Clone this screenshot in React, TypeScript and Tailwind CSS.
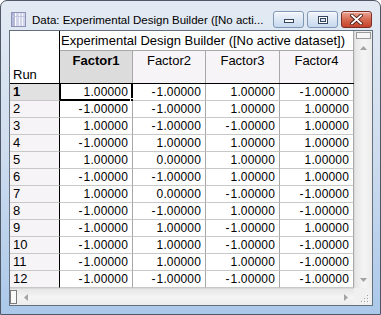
import React from "react";

const data: number[][] = [
  [1, -1, 1, -1],
  [-1, -1, 1, 1],
  [1, -1, -1, 1],
  [-1, 1, 1, 1],
  [1, 0, 1, 1],
  [-1, -1, 1, 1],
  [1, 0, -1, -1],
  [-1, -1, 1, -1],
  [-1, 1, -1, 1],
  [-1, 1, -1, -1],
  [-1, 1, 1, -1],
  [-1, -1, -1, -1],
];

const colW = ["w-[73px]", "w-[73px]", "w-[74px]", "w-[74px]"];
const headers = ["Factor1", "Factor2", "Factor3", "Factor4"];

function Num({ v }: { v: number }) {
  const s = Math.abs(v).toFixed(5);
  return (
    <>
      {v < 0 && <span className="mr-[1px]">-</span>}
      {s}
    </>
  );
}

function TitleIcon() {
  return (
    <svg width="15" height="15" viewBox="0 0 15 15">
      <rect x="0.5" y="0.5" width="14" height="14" fill="#d3d6ea" stroke="#8d92b6" />
      <rect x="1" y="1" width="3" height="13" fill="#b4b8d8" />
      <line x1="4.5" y1="1" x2="4.5" y2="14" stroke="#ffffff" />
      <line x1="8.5" y1="1" x2="8.5" y2="14" stroke="#f4f4fb" />
      <line x1="11.5" y1="1" x2="11.5" y2="14" stroke="#f4f4fb" />
      <line x1="1" y1="4.5" x2="14" y2="4.5" stroke="#c2c5df" />
    </svg>
  );
}

function CaptionButton({ kind }: { kind: "min" | "max" | "close" }) {
  if (kind === "close") {
    return (
      <div className="w-[31px] h-[17px] rounded-[3px] border border-[#7e2f25] bg-linear-to-b from-[#eaa596] via-[#d66a52] to-[#c4412b] flex items-center justify-center shadow-[inset_0_1px_0_rgba(255,255,255,0.5)]">
        <svg width="13" height="11" viewBox="0 0 13 11">
          <path d="M2 1.5 L11 9.5 M11 1.5 L2 9.5" stroke="#4a1d16" strokeWidth="3.6" strokeLinecap="square" />
          <path d="M2 1.5 L11 9.5 M11 1.5 L2 9.5" stroke="#ffffff" strokeWidth="1.8" strokeLinecap="square" />
        </svg>
      </div>
    );
  }
  return (
    <div className="w-[31px] h-[17px] rounded-[3px] border border-[#7f96b5] bg-linear-to-b from-[#f3f6fb] via-[#dce7f4] to-[#c6d8ee] flex items-center justify-center shadow-[inset_0_1px_0_rgba(255,255,255,0.8)]">
      {kind === "min" ? (
        <svg width="12" height="9" viewBox="0 0 12 9">
          <rect x="1.5" y="4.5" width="9" height="3" fill="#ffffff" stroke="#36465c" />
        </svg>
      ) : (
        <svg width="12" height="10" viewBox="0 0 12 10">
          <rect x="1.5" y="1.5" width="9" height="7" fill="none" stroke="#36465c" />
          <rect x="2.5" y="2.5" width="7" height="5" fill="none" stroke="#ffffff" />
          <rect x="3.5" y="3.5" width="5" height="3" fill="none" stroke="#36465c" />
        </svg>
      )}
    </div>
  );
}

function Arrow({ dir }: { dir: "up" | "down" | "left" | "right" }) {
  const paths: Record<string, string> = {
    up: "M0 4 L3.5 0 L7 4 Z",
    down: "M0 0 L7 0 L3.5 4 Z",
    left: "M4 0 L4 7 L0 3.5 Z",
    right: "M0 0 L4 3.5 L0 7 Z",
  };
  const w = dir === "up" || dir === "down" ? 7 : 4;
  const h = dir === "up" || dir === "down" ? 4 : 7;
  return (
    <svg width={w} height={h} viewBox={`0 0 ${w} ${h}`}>
      <path d={paths[dir]} fill="#a3a3a3" />
    </svg>
  );
}

function SizeGrip() {
  const dots = [
    [8, 2],
    [5, 5],
    [8, 5],
    [2, 8],
    [5, 8],
    [8, 8],
  ];
  return (
    <svg width="10" height="10" viewBox="0 0 10 10">
      {dots.map(([x, y], i) => (
        <g key={i}>
          <rect x={x + 1} y={y + 1} width="1" height="1" fill="#ffffff" />
          <rect x={x} y={y} width="1" height="1" fill="#a0a0a0" />
        </g>
      ))}
    </svg>
  );
}

export default function App() {
  return (
    <div className="w-[381px] h-[315px] bg-white" style={{ fontFamily: '"Liberation Sans", Arial, sans-serif' }}>
      <div className="w-[381px] h-[315px] flex flex-col rounded-t-[7px] border border-[#4e5866] bg-linear-to-b from-[#e3eaf3] via-[#cddcee] to-[#abc8ea] overflow-hidden">
        {/* Title bar */}
        <div className="h-[29px] flex items-start shrink-0">
          <div className="mt-[11px] ml-[10px]">
            <TitleIcon />
          </div>
          <div className="mt-[12px] ml-[6px] text-[11.5px] leading-[14px] text-black whitespace-nowrap">
            Data: Experimental Design Builder ([No acti...
          </div>
          <div className="ml-auto mr-[8px] mt-[10px] flex gap-[3px]">
            <CaptionButton kind="min" />
            <CaptionButton kind="max" />
            <CaptionButton kind="close" />
          </div>
        </div>

        {/* Client area */}
        <div className="flex-1 flex pl-[8px] pr-[7px] pb-[8px]">
          <div className="flex-1 flex flex-col border border-[#65707e] bg-[#f0f0f0]">
            <div className="flex-1 flex">
              {/* Spreadsheet */}
              <div className="flex-1 flex flex-col text-black">
                {/* header block */}
                <div className="flex">
                  <div className="w-[50px] h-[53px] bg-white border-r border-b border-black flex items-end pl-[3px] pb-[1px] text-[13px] leading-[15px]">
                    Run
                  </div>
                  <div className="flex flex-col">
                    <div className="h-[20px] bg-white border-b border-r border-[#a8a8a8] pl-[1px] text-[13px] leading-[19px] whitespace-nowrap w-[294px]">
                      Experimental Design Builder ([No active dataset])
                    </div>
                    <div className="flex h-[33px] border-b border-black">
                      {headers.map((h, i) => (
                        <div
                          key={h}
                          className={`${colW[i]} border-r border-[#a8a8a8] text-center text-[13px] leading-[15px] pt-[2px] ${
                            i === 0 ? "bg-[#dcdcdc] font-bold" : "bg-[#f7f4f7]"
                          }`}
                        >
                          {h}
                        </div>
                      ))}
                    </div>
                  </div>
                </div>
                {/* data rows */}
                {data.map((row, r) => (
                  <div key={r} className="flex h-[17px]">
                    <div
                      className={`w-[50px] border-r border-r-black border-b border-b-[#c8c8c8] pl-[3px] text-[13px] leading-[16px] ${
                        r === 0 ? "bg-[#e1e1e1] font-bold" : "bg-[#f7f4f7]"
                      }`}
                    >
                      {r + 1}
                    </div>
                    {row.map((v, c) => (
                      <div
                        key={c}
                        className={`${colW[c]} relative bg-white border-r border-r-[#a8a8a8] border-b border-b-[#c8c8c8] text-right pr-[4px] text-[12px] leading-[16px] tracking-[0.15px]`}
                      >
                        <Num v={v} />
                        {r === 0 && c === 0 && (
                          <div className="absolute left-0 top-[-1px] right-[-1px] bottom-[-1px] border-l border-t border-r-2 border-b-2 border-black">
                            <div className="absolute right-[-4px] bottom-[-4px] w-[5px] h-[5px] bg-black border border-white" />
                          </div>
                        )}
                      </div>
                    ))}
                  </div>
                ))}
              </div>
              {/* Vertical scrollbar */}
              <div className="w-[18px] flex flex-col bg-linear-to-r from-[#e6e6e6] via-[#f4f4f4] to-[#ececec] border-l border-[#d8d8d8]">
                <div className="h-[7px] mx-[1px] mt-[1px] border border-[#9a9a9a] bg-[#f6f6f6]" />
                <div className="h-[18px] flex items-center justify-center">
                  <Arrow dir="up" />
                </div>
                <div className="flex-1" />
                <div className="h-[17px] flex items-center justify-center">
                  <Arrow dir="down" />
                </div>
              </div>
            </div>
            {/* Horizontal scrollbar */}
            <div className="h-[17px] flex">
              <div className="flex-1 flex bg-linear-to-b from-[#e6e6e6] via-[#f4f4f4] to-[#ececec] border-t border-[#d8d8d8]">
                <div className="w-[7px] my-[1px] ml-[0px] border border-[#7c7c7c] bg-[#fafafa]" />
                <div className="w-[18px] flex items-center justify-center">
                  <Arrow dir="left" />
                </div>
                <div className="flex-1" />
                <div className="w-[17px] flex items-center justify-center">
                  <Arrow dir="right" />
                </div>
              </div>
              <div className="w-[18px] bg-[#f0f0f0] flex items-end justify-end pr-[3px] pb-[2px]">
                <SizeGrip />
              </div>
            </div>
          </div>
        </div>
      </div>
    </div>
  );
}
